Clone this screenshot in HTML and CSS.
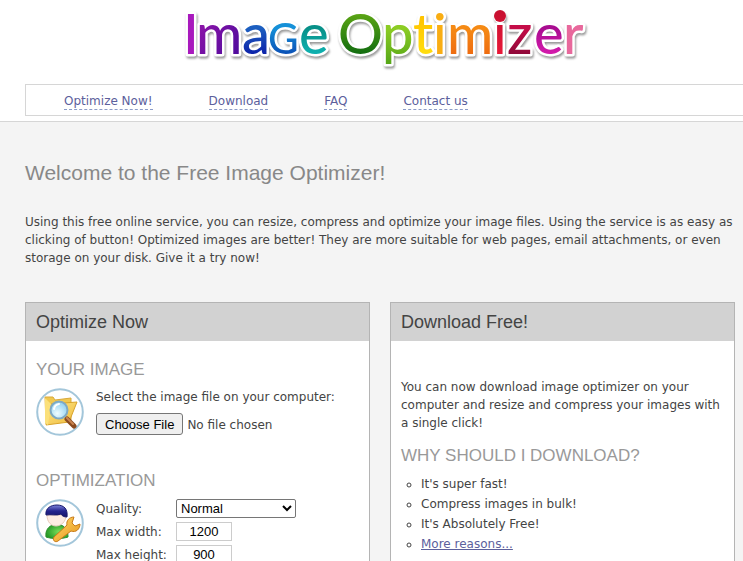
FILE: index.html
```html
<!DOCTYPE html>
<html lang="en">
<head>
  <meta charset="UTF-8">
  <title>Image Optimizer</title>
  <link rel="stylesheet" href="styles.css">
</head>
<body>
  <header class="header">
    <svg class="logo" viewBox="0 0 410 84" role="img" aria-label="Image Optimizer">
      <defs>
        <linearGradient id="gM" gradientUnits="userSpaceOnUse" x1="20" y1="28" x2="62" y2="56"><stop offset="0" stop-color="#8a14a8"/><stop offset="1" stop-color="#4b0a9c"/></linearGradient>
        <linearGradient id="gA" gradientUnits="userSpaceOnUse" x1="0" y1="28" x2="0" y2="56"><stop offset="0" stop-color="#1c5fc0"/><stop offset="1" stop-color="#0c1ea8"/></linearGradient>
        <linearGradient id="gG" gradientUnits="userSpaceOnUse" x1="0" y1="28" x2="0" y2="56"><stop offset="0" stop-color="#1590d8"/><stop offset="1" stop-color="#0a4cb4"/></linearGradient>
        <linearGradient id="gE" gradientUnits="userSpaceOnUse" x1="0" y1="28" x2="0" y2="56"><stop offset="0" stop-color="#079088"/><stop offset="1" stop-color="#10b4b4"/></linearGradient>
        <linearGradient id="gO" gradientUnits="userSpaceOnUse" x1="0" y1="14" x2="0" y2="56"><stop offset="0" stop-color="#5aa414"/><stop offset="1" stop-color="#0f6a10"/></linearGradient>
        <linearGradient id="gP" gradientUnits="userSpaceOnUse" x1="0" y1="28" x2="0" y2="62"><stop offset="0" stop-color="#8ccc24"/><stop offset="1" stop-color="#58a818"/></linearGradient>
        <linearGradient id="gT" gradientUnits="userSpaceOnUse" x1="0" y1="18" x2="0" y2="56"><stop offset="0" stop-color="#ffc400"/><stop offset="1" stop-color="#ffdf10"/></linearGradient>
        <linearGradient id="gN" gradientUnits="userSpaceOnUse" x1="0" y1="28" x2="0" y2="56"><stop offset="0" stop-color="#f58a14"/><stop offset="1" stop-color="#ee6a10"/></linearGradient>
        <linearGradient id="gR" gradientUnits="userSpaceOnUse" x1="0" y1="12" x2="0" y2="56"><stop offset="0" stop-color="#c81030"/><stop offset="1" stop-color="#ea1838"/></linearGradient>
        <linearGradient id="gZ" gradientUnits="userSpaceOnUse" x1="0" y1="28" x2="0" y2="56"><stop offset="0" stop-color="#c40c48"/><stop offset="1" stop-color="#8c0838"/></linearGradient>
        <linearGradient id="gV" gradientUnits="userSpaceOnUse" x1="0" y1="28" x2="0" y2="56"><stop offset="0" stop-color="#a80c90"/><stop offset="1" stop-color="#d81cae"/></linearGradient>
      </defs>
      <text class="logo-text" y="54"><tspan x="4" fill="#a819bd">I</tspan><tspan x="17" fill="url(#gM)">m</tspan><tspan x="63" fill="url(#gA)">a</tspan><tspan class="logo-small" x="89" fill="url(#gG)">G</tspan><tspan x="120" fill="url(#gE)">e</tspan> <tspan x="159" fill="url(#gO)">O</tspan><tspan x="203" fill="url(#gP)">p</tspan><tspan x="234" fill="url(#gT)">t</tspan><tspan x="254" fill="#f9ad12">i</tspan><tspan x="268" fill="url(#gN)">m</tspan><tspan x="314" fill="url(#gR)">i</tspan><tspan x="328" fill="url(#gZ)">z</tspan><tspan x="355" fill="url(#gV)">e</tspan><tspan x="384" fill="#e8689c">r</tspan></text>
      <circle cx="321" cy="16" r="6" fill="url(#gR)"/>
    </svg>
    <nav class="nav">
      <a href="#optimize">Optimize Now!</a>
      <a href="#download">Download</a>
      <a href="#faq">FAQ</a>
      <a href="#contact">Contact us</a>
    </nav>
  </header>

  <main class="main">
    <h1>Welcome to the Free Image Optimizer!</h1>
    <p class="intro">Using this free online service, you can resize, compress and optimize your image files. Using the service is as easy as clicking of button! Optimized images are better! They are more suitable for web pages, email attachments, or even storage on your disk. Give it a try now!</p>

    <div class="columns">
      <section class="box" id="optimize">
        <h2>Optimize Now</h2>
        <form class="box-body">
          <h3>YOUR IMAGE</h3>
          <div class="step step-file">
            <svg class="icon" viewBox="0 0 48 48" aria-hidden="true">
              <defs>
                <linearGradient id="folder" x1="0" y1="0" x2="1" y2="1"><stop offset="0" stop-color="#ffe98a"/><stop offset="1" stop-color="#eeb93a"/></linearGradient>
                <radialGradient id="lens" cx="0.4" cy="0.7" r="0.7"><stop offset="0" stop-color="#effcff"/><stop offset="1" stop-color="#8fd0f2"/></radialGradient>
              </defs>
              <circle cx="24" cy="24" r="22.8" fill="#fff" stroke="#a3c6da" stroke-width="2"/>
              <path d="M9 9h8l2 3 16-2v22l-25 4z" fill="#f0c850" stroke="#d9a93a"/>
              <path d="M15 16l26-2-8 20-23 3z" fill="url(#folder)" stroke="#d9a42c"/>
              <path d="M9 10l6 6-3 21-3-2z" fill="#fbe07a"/>
              <path d="M31 31l7 7" stroke="#8a4a20" stroke-width="5" stroke-linecap="round"/>
              <path d="M31 30l6 6" stroke="#c98450" stroke-width="2" stroke-linecap="round"/>
              <circle cx="23" cy="22" r="8.5" fill="url(#lens)" stroke="#7fa9c4" stroke-width="2"/>
              <path d="M18 21a6 6 0 0 1 5-5" fill="none" stroke="#fff" stroke-width="2" stroke-linecap="round"/>
            </svg>
            <div>
              <label class="file-label" for="imageFile">Select the image file on your computer:</label>
              <input class="file" type="file" id="imageFile">
            </div>
          </div>

          <h3>OPTIMIZATION</h3>
          <div class="step">
            <svg class="icon" viewBox="0 0 48 48" aria-hidden="true">
              <defs>
                <linearGradient id="hair" x1="0" y1="0" x2="0" y2="1"><stop offset="0" stop-color="#7f86dc"/><stop offset="0.5" stop-color="#24248e"/><stop offset="1" stop-color="#15156a"/></linearGradient>
                <radialGradient id="shirt" cx="0.6" cy="0.5" r="0.6"><stop offset="0" stop-color="#7be05a"/><stop offset="1" stop-color="#259a28"/></radialGradient>
                <linearGradient id="wrench" x1="0" y1="0" x2="1" y2="1"><stop offset="0" stop-color="#ffd96a"/><stop offset="1" stop-color="#e8951a"/></linearGradient>
              </defs>
              <circle cx="24" cy="24" r="22.8" fill="#fff" stroke="#a3c6da" stroke-width="2"/>
              <path d="M10 38c-1-7 3-11 7-12h8c5 2 7 6 7 12-6 2-16 2-22 0z" fill="url(#shirt)" stroke="#2c8c2c"/>
              <path d="M11 16c0 7 4 11 9 11s10-4 10-11z" fill="#fdece2" stroke="#e8cbbb"/>
              <path d="M10 16c-1-7 5-10 11-10 7 0 11 4 10 12-3 0-5-1-6-3-4 2-10 0-15 1z" fill="url(#hair)" stroke="#18186c"/>
              <path d="M18 38l13-12c-1-4 2-8 7-8l-2 6 3 3 5-2c0 5-4 9-9 7L22 42c-3 2-6-1-4-4z" fill="url(#wrench)" stroke="#c87a18"/>
            </svg>
            <div class="fields">
              <label for="quality">Quality:</label>
              <select id="quality">
                <option>Normal</option>
              </select>
              <label for="maxWidth">Max width:</label>
              <input type="text" id="maxWidth" value="1200">
              <label for="maxHeight">Max height:</label>
              <input type="text" id="maxHeight" value="900">
            </div>
          </div>
        </form>
      </section>

      <section class="box" id="download">
        <h2>Download Free!</h2>
        <div class="box-body">
          <p class="download-text">You can now download image optimizer on your computer and resize and compress your images with a single click!</p>
          <h3>WHY SHOULD I DOWNLOAD?</h3>
          <ul>
            <li>It's super fast!</li>
            <li>Compress images in bulk!</li>
            <li>It's Absolutely Free!</li>
            <li><a href="#reasons">More reasons...</a></li>
          </ul>
        </div>
      </section>
    </div>
  </main>
</body>
</html>
```
FILE: styles.css
```css
* {
  box-sizing: border-box;
}
html {
  scrollbar-width: none;
}
body {
  margin: 0;
  background: #f4f4f4;
  color: #444;
  font-family: "DejaVu Sans", Tahoma, sans-serif;
  font-size: 12px;
  line-height: 18px;
}
a {
  color: #5c609c;
}
h1, h2, h3 {
  margin: 0;
  font-family: "Liberation Sans", Arial, sans-serif;
  font-weight: normal;
}
h1 {
  color: #888;
  font-size: 21px;
  line-height: 26px;
}
h2 {
  padding: 0 10px;
  background: #d2d2d2;
  font-size: 18px;
  line-height: 38px;
}
h3 {
  color: #999;
  font-size: 17px;
  line-height: 20px;
}

/* header */
.header {
  padding: 0 0 5px 25px;
  background: #fff;
  border-bottom: 1px solid #d6d6d6;
}
.logo {
  display: block;
  width: 410px;
  height: 84px;
  margin: 0 auto;
}
.logo-text {
  font-family: Lato, sans-serif;
  font-size: 56px;
  font-weight: 500;
  stroke: #fff;
  stroke-width: 5px;
  stroke-linejoin: round;
  paint-order: stroke;
  filter: drop-shadow(1px 2px 1px rgba(0, 0, 0, 0.4));
}
.logo-small {
  font-size: 42px;
}
.nav {
  display: flex;
  gap: 56px;
  padding: 8px 38px 5px;
  border: 1px solid #d6d6d6;
  border-right: none;
}
.nav a {
  line-height: 16px;
  border-bottom: 1px dashed #8c9cc8;
  text-decoration: none;
}

/* content */
.main {
  padding: 38px 6px 0 25px;
}
.intro {
  margin: 27px 0 35px;
}
.columns {
  display: grid;
  grid-template-columns: 1fr 1fr;
  gap: 20px;
  margin-right: 2px;
}
.box {
  background: #fff;
  border: 1px solid #b4b4b4;
}
.box-body {
  padding: 19px 10px;
}
.step {
  display: flex;
  gap: 12px;
  padding-top: 8px;
}
.step-file {
  margin-bottom: 35px;
}
.icon {
  flex: none;
  width: 48px;
  height: 48px;
}
.file-label {
  display: block;
  margin-bottom: 7px;
}
.file {
  display: block;
  width: 100%;
  color: #444;
  font: inherit;
}
.file::file-selector-button {
  height: 22px;
  padding: 0 8px;
  border: 1px solid #767676;
  border-radius: 3px;
  background: #efefef;
  color: #000;
  font: 13px "Liberation Sans", Arial, sans-serif;
}
.fields {
  display: grid;
  grid-template-columns: 80px 120px;
  gap: 4px 0;
  align-items: center;
}
.fields select,
.fields input {
  height: 19px;
  color: #000;
  font: 13px "Liberation Sans", Arial, sans-serif;
}
.fields select {
  padding: 0;
  border: 1px solid #767676;
  border-radius: 2px;
  background: #fff;
}
.fields input {
  width: 56px;
  padding: 0;
  border: 1px solid #ccc;
  text-align: center;
}
.download-text {
  margin: 18px 0 14px;
}
ul {
  margin: 8px 0 0;
  padding-left: 20px;
  list-style: circle;
}
li {
  line-height: 20px;
}
```
